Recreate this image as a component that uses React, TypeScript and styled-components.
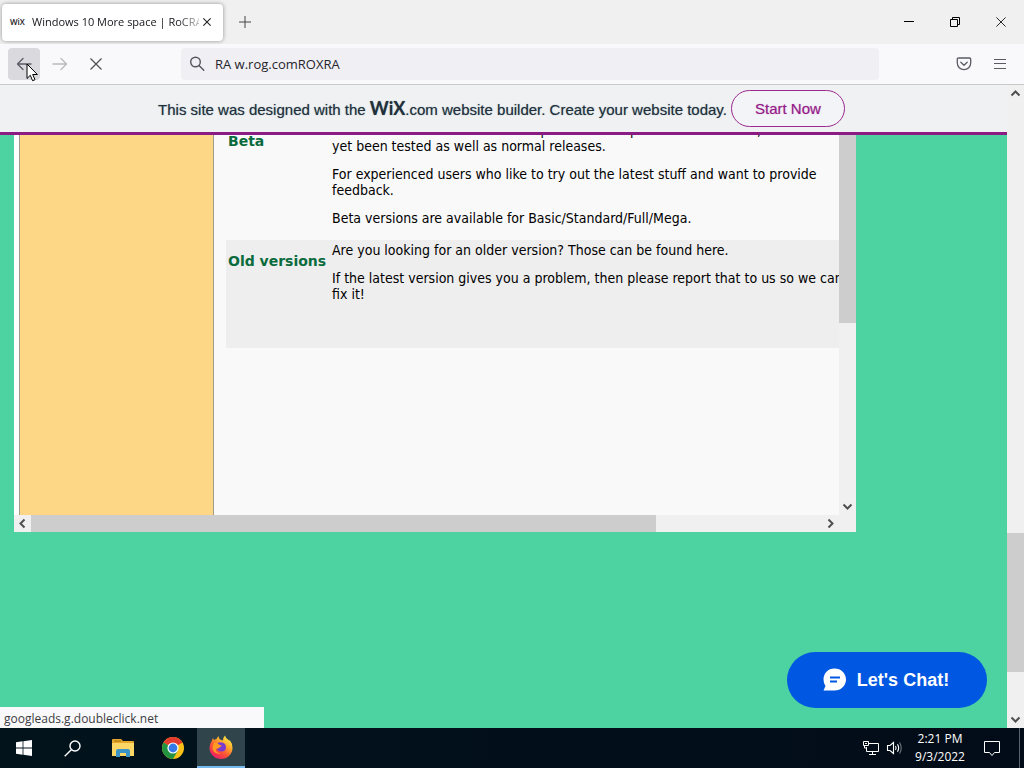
import React from "react";
import styled, { createGlobalStyle } from "styled-components";

const ui = `"Open Sans", "Noto Sans", sans-serif`;
const helvetica = `"Liberation Sans", Arial, sans-serif`;

const GlobalStyle = createGlobalStyle`
  * { box-sizing: border-box; }
  body { margin: 0; font-family: ${ui}; color: #15141a; }
  button { font: inherit; color: inherit; border: 0; padding: 0; background: none; }
  svg { display: block; flex: none; }
`;

const Desktop = styled.div`
  display: flex;
  flex-direction: column;
  height: 100vh;
  overflow: hidden;
`;

const TitleBar = styled.header`
  display: flex;
  align-items: center;
  height: 44px;
  padding-left: 2px;
  background: #f0f0f0;
`;

const Tab = styled.div`
  display: flex;
  align-items: center;
  gap: 6px;
  width: 221px;
  height: 37px;
  padding: 0 8px;
  border-radius: 4px;
  background: #fff;
  box-shadow: 0 0 4px rgba(0, 0, 0, 0.4);
`;

const Favicon = styled.span`
  width: 16px;
  font: 600 8px/16px "Open Sans", sans-serif;
`;

const TabTitle = styled.span`
  flex: 1;
  overflow: hidden;
  font-size: 11px;
  line-height: 20px;
  white-space: nowrap;
  mask-image: linear-gradient(to right, #000 146px, transparent 174px);
`;

const TabClose = styled.button`
  display: grid;
  place-items: center;
  width: 16px;
  height: 24px;
  margin-left: -6px;
`;

const NewTab = styled.button`
  display: grid;
  place-items: center;
  width: 32px;
  height: 32px;
  margin-left: 6px;
`;

const WindowControls = styled.div`
  display: flex;
  margin-left: auto;
`;

const WindowButton = styled.button`
  display: grid;
  place-items: center;
  width: 46px;
  height: 44px;
`;

const Toolbar = styled.nav`
  display: flex;
  align-items: center;
  gap: 4px;
  height: 41px;
  padding: 0 8px;
  background: #f9f9fb;
  border-bottom: 1px solid #c8c8cd;
`;

const ToolButton = styled.button<{ $active?: boolean }>`
  position: relative;
  display: grid;
  place-items: center;
  width: 32px;
  height: 32px;
  border-radius: 4px;
  background: ${(p) => (p.$active ? "#d9d9de" : "transparent")};
`;

const Pointer = styled.svg`
  position: absolute;
  left: 18px;
  top: 15px;
  z-index: 2;
`;

const AddressBar = styled.label`
  display: flex;
  flex: 1;
  align-items: center;
  gap: 10px;
  height: 32px;
  margin: 0 65px;
  padding: 0 8px;
  border-radius: 4px;
  background: #f0f0f4;
`;

const AddressInput = styled.input`
  flex: 1;
  min-width: 0;
  padding: 0;
  border: 0;
  outline: 0;
  background: none;
  font: 13px/20px ${ui};
  color: #26252c;
`;

const Viewport = styled.main`
  position: relative;
  display: flex;
  flex: 1;
  min-height: 0;
`;

const Site = styled.div`
  display: flex;
  flex: 1;
  flex-direction: column;
  min-width: 0;
  background: #4cd3a1;
`;

const Banner = styled.div`
  display: flex;
  align-items: center;
  justify-content: center;
  gap: 4px;
  height: 50px;
  padding-right: 4px;
  background: #eff1f3;
  border-bottom: 3px solid #8b1c83;
  font: 15px/20px ${helvetica};
  color: #20303c;
`;

const BannerText = styled.span`
  white-space: nowrap;
  text-shadow: 0 0 1px rgba(32, 48, 60, 0.5);
`;

const WixMark = styled.b`
  font: 700 18px/20px Lato, sans-serif;
`;

const StartButton = styled.button`
  width: 114px;
  height: 37px;
  border: 1px solid #9a2a8f;
  border-radius: 19px;
  background: #f3f4f7;
  color: #951b89;
  text-shadow: 0 0 1px rgba(149, 27, 137, 0.5);
`;

const Embed = styled.section`
  display: grid;
  grid-template-columns: minmax(0, 1fr) 17px;
  grid-template-rows: 380px 17px;
  max-width: 842px;
  margin-left: 14px;
  background: #fff;
`;

const EmbedPage = styled.div`
  display: flex;
  margin-left: 5px;
  overflow: hidden;
  background: #f9f9f9;
`;

const SideColumn = styled.div`
  flex: none;
  width: 195px;
  border: solid #a09c8c;
  border-width: 0 1px;
  background: #fdd785;
`;

const Versions = styled.table`
  flex: none;
  align-self: flex-start;
  width: 640px;
  margin: -15px 0 0 12px;
  border-collapse: collapse;
  font: 14px/16px "DejaVu Sans Condensed", "DejaVu Sans", sans-serif;
  color: #000;
`;

const VersionRow = styled.tr<{ $shaded?: boolean; $height: number }>`
  height: ${(p) => p.$height}px;
  background: ${(p) => (p.$shaded ? "#eee" : "transparent")};
  vertical-align: top;
`;

const VersionName = styled.th`
  width: 104px;
  padding: 12px 0 0 2px;
  color: #0a6b3d;
  font: 700 14px/18px "DejaVu Sans", sans-serif;
  text-align: left;
  white-space: nowrap;
`;

const VersionInfo = styled.td`
  padding: 2px;
  white-space: nowrap;
  p { margin: 0 0 12px; }
`;

const Track = styled.div<{ $row?: boolean }>`
  display: flex;
  flex-direction: ${(p) => (p.$row ? "row" : "column")};
  background: #f0f0f0;
`;

const Arrow = styled.button`
  display: grid;
  place-items: center;
  flex: none;
  width: 17px;
  height: 17px;
`;

const Spacer = styled.div`
  flex: 1;
`;

const Thumb = styled.div<{ $size: string }>`
  flex: 0 0 ${(p) => p.$size};
  background: #cdcdcd;
`;

const Corner = styled.div`
  background: #f0f0f0;
`;

const ChatButton = styled.button`
  position: absolute;
  right: 37px;
  bottom: 20px;
  display: flex;
  align-items: center;
  justify-content: center;
  gap: 10px;
  width: 200px;
  height: 56px;
  padding-right: 3px;
  border-radius: 28px;
  background: #0057e1;
  color: #fff;
  font: 700 18px/24px ${helvetica};
`;

const StatusBubble = styled.div`
  position: absolute;
  left: 0;
  bottom: 0;
  width: 264px;
  height: 21px;
  padding: 3px 4px 0;
  background: #f9f9fb;
  color: #3c3c42;
  font-size: 12px;
  line-height: 18px;
`;

const Taskbar = styled.footer`
  display: flex;
  height: 40px;
  background: linear-gradient(90deg, #02131c, #020c18);
  color: #fff;
`;

const TaskButton = styled.button<{ $width: number; $active?: boolean }>`
  display: grid;
  place-items: center;
  width: ${(p) => p.$width}px;
  height: 40px;
  background: ${(p) => (p.$active ? "#30454b" : "transparent")};
  border-bottom: ${(p) => (p.$active ? "2px solid #76b9ed" : "0")};
`;

const Tray = styled.div`
  display: flex;
  align-items: center;
  margin-left: auto;
`;

const TrayIcons = styled.div`
  display: flex;
  gap: 6px;
`;

const Clock = styled.time`
  width: 72px;
  font-size: 12px;
  line-height: 18px;
  text-align: center;
  white-space: nowrap;
`;

const ShowDesktop = styled.div`
  width: 5px;
  height: 40px;
  margin-left: 11px;
  border-left: 1px solid #59616a;
`;

const rotations = { up: 0, right: 90, down: 180, left: 270 };

function Chevron({ to }: { to: keyof typeof rotations }) {
  return (
    <svg width="11" height="11" viewBox="0 0 11 11" fill="none" stroke="#505050" strokeWidth="2">
      <path d="M1.5 7.5l4-4 4 4" transform={`rotate(${rotations[to]} 5.5 5.5)`} />
    </svg>
  );
}

function Cross({ size, color, width = 1 }: { size: number; color: string; width?: number }) {
  return (
    <svg width={size} height={size} viewBox="0 0 12 12" fill="none" stroke={color} strokeWidth={width}>
      <path d="M.5.5l11 11M11.5.5l-11 11" />
    </svg>
  );
}

function BackArrow({ flip }: { flip?: boolean }) {
  return (
    <svg width="16" height="16" viewBox="0 0 16 16" fill="none" stroke={flip ? "#b9b9bf" : "#5b5b66"} strokeWidth="1.3" strokeLinecap="round" strokeLinejoin="round">
      <path d="M7 2.5L1.5 8 7 13.5M1.5 8h13.5" transform={flip ? "rotate(180 8 8)" : undefined} />
    </svg>
  );
}

export default function App() {
  return (
    <Desktop>
      <GlobalStyle />
      <TitleBar>
        <Tab>
          <Favicon>WiX</Favicon>
          <TabTitle>Windows 10 More space | RoCRA</TabTitle>
          <TabClose aria-label="Close tab"><Cross size={8} color="#222" width={1.6} /></TabClose>
        </Tab>
        <NewTab aria-label="New tab">
          <svg width="12" height="12" viewBox="0 0 12 12" stroke="#444"><path d="M6 0v12M0 6h12" /></svg>
        </NewTab>
        <WindowControls>
          <WindowButton aria-label="Minimize">
            <svg width="10" height="10" viewBox="0 0 10 10" stroke="#000"><path d="M0 4.5h10" /></svg>
          </WindowButton>
          <WindowButton aria-label="Restore">
            <svg width="10" height="10" viewBox="0 0 10 10" fill="none" stroke="#000"><path d="M.5 2.5h7v7h-7zM2.5 2.5v-2h7v7h-2" /></svg>
          </WindowButton>
          <WindowButton aria-label="Close"><Cross size={10} color="#000" /></WindowButton>
        </WindowControls>
      </TitleBar>

      <Toolbar>
        <ToolButton $active aria-label="Back">
          <BackArrow />
          <Pointer width="13" height="19" viewBox="0 0 13 19">
            <path d="M1 1v14.500l3.300-3.200 2.300 5.400 2.400-1-2.300-5.200h4.700z" fill="#fff" stroke="#000" />
          </Pointer>
        </ToolButton>
        <ToolButton aria-label="Forward"><BackArrow flip /></ToolButton>
        <ToolButton aria-label="Stop"><Cross size={12} color="#4a4a52" width={1.1} /></ToolButton>
        <AddressBar>
          <svg width="16" height="16" viewBox="0 0 16 16" fill="none" stroke="#55555e" strokeWidth="1.4" strokeLinecap="round">
            <circle cx="6.5" cy="6" r="4.8" /><path d="M10 9.500l4.800 4.800" />
          </svg>
          <AddressInput aria-label="Address" defaultValue="RA w.rog.comROXRA" />
        </AddressBar>
        <ToolButton aria-label="Save to Pocket">
          <svg width="16" height="16" viewBox="0 0 16 16" fill="none" stroke="#5b5b66" strokeWidth="1.3" strokeLinecap="round" strokeLinejoin="round">
            <path d="M2.500 2h11q1.200 0 1.200 1.200V7a6.700 6.700 0 0 1-13.400 0V3.200Q1.300 2 2.500 2zM4.800 6.200L8 9.200l3.200-3" />
          </svg>
        </ToolButton>
        <ToolButton aria-label="Menu">
          <svg width="14" height="12" viewBox="0 0 14 12" stroke="#5b5b66"><path d="M1 1.500h12M1 5.500h12M1 10.500h12" /></svg>
        </ToolButton>
      </Toolbar>

      <Viewport>
        <Site>
          <Banner>
            <BannerText>
              This site was designed with the <WixMark>WiX</WixMark>.com website builder. Create your website today.
            </BannerText>
            <StartButton>Start Now</StartButton>
          </Banner>
          <Embed>
            <EmbedPage>
              <SideColumn />
              <Versions>
                <tbody>
                  <VersionRow $height={120}>
                    <VersionName scope="row">Beta</VersionName>
                    <VersionInfo>
                      <p>Beta versions contain the most up-to-date components and tweaks, but have not<br />yet been tested as well as normal releases.</p>
                      <p>For experienced users who like to try out the latest stuff and want to provide<br />feedback.</p>
                      <p>Beta versions are available for Basic/Standard/Full/Mega.</p>
                    </VersionInfo>
                  </VersionRow>
                  <VersionRow $shaded $height={108}>
                    <VersionName scope="row">Old versions</VersionName>
                    <VersionInfo>
                      <p>Are you looking for an older version? Those can be found here.</p>
                      <p>If the latest version gives you a problem, then please report that to us so we can<br />fix it!</p>
                    </VersionInfo>
                  </VersionRow>
                </tbody>
              </Versions>
            </EmbedPage>
            <Track>
              <Thumb $size="188px" />
              <Spacer />
              <Arrow aria-label="Scroll frame down"><Chevron to="down" /></Arrow>
            </Track>
            <Track $row>
              <Arrow aria-label="Scroll frame left"><Chevron to="left" /></Arrow>
              <Thumb $size="625px" />
              <Spacer />
              <Arrow aria-label="Scroll frame right"><Chevron to="right" /></Arrow>
            </Track>
            <Corner />
          </Embed>
        </Site>
        <Track>
          <Arrow aria-label="Scroll page up"><Chevron to="up" /></Arrow>
          <Spacer />
          <Thumb $size="139px" />
          <Thumb as={Corner} $size="39px" />
          <Arrow aria-label="Scroll page down"><Chevron to="down" /></Arrow>
        </Track>
        <ChatButton>
          <svg width="25" height="24" viewBox="0 0 25 24">
            <path d="M12.500.5C19 .5 24 5.300 24 11.500S19 22.500 12.500 22.500H1.500l2-4.500A11 11 0 0 1 1.500 11.500C1.500 5.300 6 .5 12.500.5z" fill="#fff" />
            <path d="M8 9.500h10M8 13.500h7" stroke="#0057e1" strokeWidth="2" />
          </svg>
          Let's Chat!
        </ChatButton>
        <StatusBubble>googleads.g.doubleclick.net</StatusBubble>
      </Viewport>

      <Taskbar>
        <TaskButton $width={48} aria-label="Start">
          <svg width="16" height="16" viewBox="0 0 16 16" fill="#fff">
            <path d="M0 2.200L6.600 1.300v6.300H0zM7.400 1.200L16 0v7.600H7.400zM0 8.400h6.600v6.300L0 13.800zM7.400 8.400H16V16l-8.600-1.200z" />
          </svg>
        </TaskButton>
        <TaskButton $width={48} aria-label="Search">
          <svg width="17" height="17" viewBox="0 0 17 17" fill="none" stroke="#fff" strokeWidth="1.4">
            <circle cx="11" cy="6" r="5" /><path d="M7.300 9.700L.7 16.300" />
          </svg>
        </TaskButton>
        <TaskButton $width={53} aria-label="File Explorer">
          <svg width="22" height="20" viewBox="0 0 22 20">
            <path d="M0 2q0-1 1-1h8l2 2h10q1 0 1 1v4H0z" fill="#e5a82c" />
            <path d="M2 3h7" stroke="#a87512" />
            <path d="M0 5h22v13H0z" fill="#fcd765" />
            <path d="M4 19v-6q0-2 2-2h10q2 0 2 2v6h-4v-4H8v4z" fill="#3a94c8" />
          </svg>
        </TaskButton>
        <TaskButton $width={48} aria-label="Chrome">
          <svg width="22" height="22" viewBox="0 0 22 22">
            <circle cx="11" cy="11" r="11" fill="#fbc116" />
            <path d="M11 11L1.500 5.500A11 11 0 0 1 20.500 5.500z" fill="#e33b2e" />
            <path d="M1.500 5.500A11 11 0 0 0 11 22l4.800-8.300L11 11z" fill="#229342" />
            <path d="M11 6h9.800a11 11 0 0 0-.3-.5H11z" fill="#e33b2e" />
            <circle cx="11" cy="11" r="5.6" fill="#fff" />
            <circle cx="11" cy="11" r="4.4" fill="#347be8" />
          </svg>
        </TaskButton>
        <TaskButton $width={48} $active aria-label="Firefox">
          <svg width="24" height="24" viewBox="0 0 24 24">
            <defs>
              <linearGradient id="flame" x1="0.85" y1="0.05" x2="0.2" y2="0.95">
                <stop offset="0" stopColor="#fff14a" />
                <stop offset="0.35" stopColor="#ffa52b" />
                <stop offset="0.65" stopColor="#ff5236" />
                <stop offset="1" stopColor="#e91a6c" />
              </linearGradient>
            </defs>
            <path d="M3 5.500q.2-1.500 1-2.500.3 1.300 1.200 2 1-.8 2.300-1Q8.300 2 9.800 1.200q-.3 2 1.200 3.300l3 1Q14 2.500 16 .5q.5 2.500 3 4 .8.700 1.200 1.500l.4-1.200Q23.500 8.500 23.500 13A11.500 11 0 0 1 .5 13Q.5 9 3 5.500z" fill="url(#flame)" />
            <path d="M8 8.500q3-2 6-.8 3 1.300 3 4.800 0 4-4.500 4-4.500-.2-5-4 1.800 1 3.200-.2l2-1.300q-2.200 0-2.700-1.200-1-.8-2-1.300z" fill="#7a3bd0" />
            <path d="M5 8q2-1 3.500.3l2 1.700 2.200.6q-.5 1.200-2.500 2-1.500 1.800-3.200 1-1 4 5 5-7.500 1-8.500-5Q3.300 10 5 8z" fill="#ff9a22" />
          </svg>
        </TaskButton>
        <Tray>
          <TrayIcons>
            <svg width="18" height="16" viewBox="0 0 18 16" fill="none" stroke="#fff">
              <path d="M7 3.500h9.500v8H4.500V7M10.500 11.500v3M7 14.500h7M1.500 1.500h5v4h-5zM2.500 5.500v2.500h2M3 3.500h2" />
            </svg>
            <svg width="18" height="16" viewBox="0 0 18 16" fill="none" stroke="#fff" strokeWidth="1.1">
              <path d="M1.500 5.500h2.500l3.500-3v11l-3.500-3H1.500zM9.500 6q1.200 2 0 4M11.500 4.300q2.300 3.700 0 7.400" />
              <path d="M13.500 2.500q3.500 5.500 0 11" stroke="#6e7780" />
            </svg>
          </TrayIcons>
          <Clock>2:21 PM<br />9/3/2022</Clock>
          <TaskButton $width={32} aria-label="Notifications">
            <svg width="18" height="17" viewBox="0 0 18 17" fill="none" stroke="#fff">
              <path d="M1.500 1.500h15v11h-5L9 15.500l-2.500-3h-5z" />
            </svg>
          </TaskButton>
          <ShowDesktop />
        </Tray>
      </Taskbar>
    </Desktop>
  );
}
